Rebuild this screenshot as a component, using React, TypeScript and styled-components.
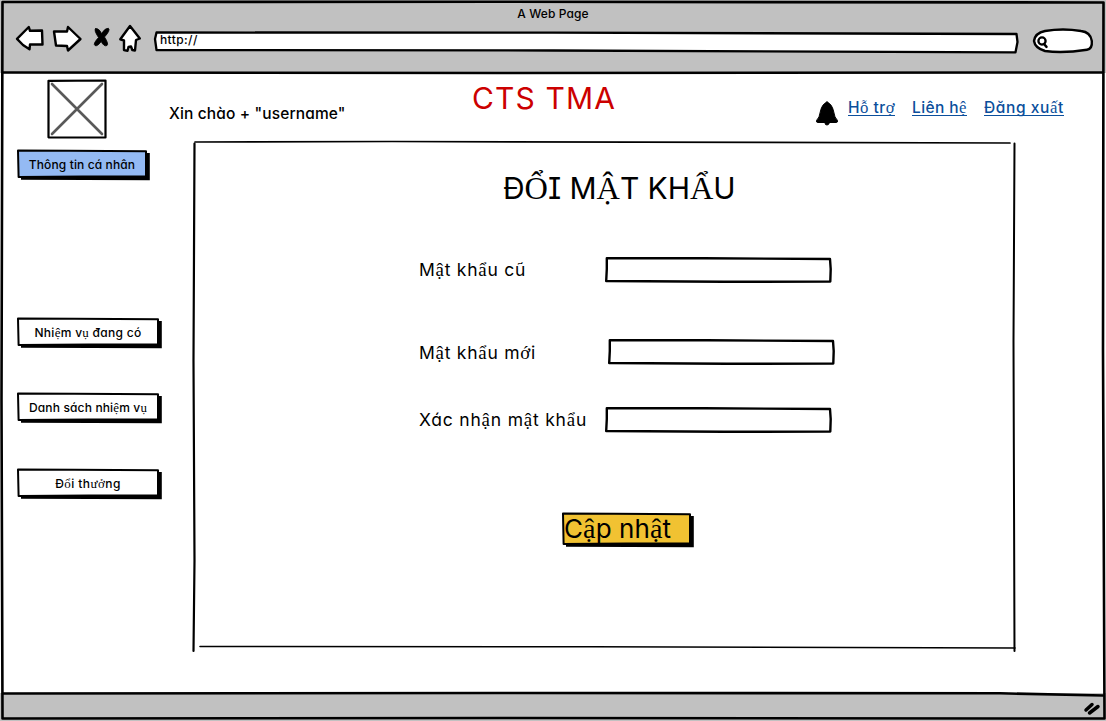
import React from "react";
import styled, { createGlobalStyle } from "styled-components";

const GlobalStyle = createGlobalStyle`
  * { box-sizing: border-box; }
  html, body { margin: 0; padding: 0; background: #fff; overflow: hidden; }
`;

const Browser = styled.div`
  position: relative;
  width: 1106px;
  height: 721px;
  display: flex;
  flex-direction: column;
  overflow: hidden;
  color: #000;
  background: #fff;
  font-family: Inter, "Open Sans", sans-serif;
  font-feature-settings: "cv11" 1, "cv08" 1;
`;

const Drawing = styled.svg`
  display: block;
  position: absolute;
  inset: 0;
  width: 100%;
  height: 100%;
  overflow: visible;
  pointer-events: none;
  fill: none;
  stroke: #000;
  stroke-linecap: round;
  stroke-linejoin: round;
`;

const Icon = styled.svg<{ $solid?: boolean }>`
  display: block;
  flex: none;
  overflow: visible;
  fill: ${(p) => (p.$solid ? "#000" : "#fff")};
  stroke: #000;
  stroke-width: ${(p) => (p.$solid ? 1 : 2.4)};
  stroke-linecap: round;
  stroke-linejoin: round;
`;

const Text = styled.span<{ $size: number; $spacing?: number; $color?: string }>`
  position: relative;
  display: block;
  white-space: pre;
  font-size: ${(p) => p.$size}px;
  font-weight: ${(p) => (p.$size < 17 ? 500 : 430)};
  line-height: ${(p) => Math.round(p.$size * 1.3)}px;
  letter-spacing: ${(p) => p.$spacing ?? 0}px;
  color: ${(p) => p.$color ?? "#000"};
`;

const Serif = styled.span`
  font-family: "Liberation Serif", serif;
  font-size: 1.08em;
  font-weight: 400;
  line-height: 0;
`;

const SERIF_RUN = /([\u1ea0-\u1ef9\u01a0\u01a1\u01af\u01b0]+)/;

function Label(props: { children: string; size: number; spacing?: number; color?: string }) {
  return (
    <Text $size={props.size} $spacing={props.spacing} $color={props.color}>
      {props.children.split(SERIF_RUN).map((part, i) =>
        i % 2 ? <Serif key={i}>{part}</Serif> : part
      )}
    </Text>
  );
}

const Chrome = styled.header`
  height: 73px;
  flex: none;
  display: flex;
  flex-direction: column;
  background: #c1c1c1;
`;

const TitleBar = styled.div`
  height: 25px;
  padding-top: 6px;
  display: flex;
  justify-content: center;
`;

const ToolBar = styled.div`
  display: flex;
  align-items: flex-start;
  padding-left: 15px;
`;

const NavIcons = styled.div`
  display: flex;
  width: 138px;
`;

const Address = styled.div`
  position: relative;
  width: 866px;
  height: 22px;
  margin-top: 4px;
  padding: 3px 7px;
`;

const Search = styled.div`
  position: relative;
  width: 61px;
  height: 26px;
  margin: 3px 0 0 14px;
`;

const Page = styled.div`
  flex: 1;
  display: flex;
`;

const Side = styled.aside`
  width: 169px;
  padding: 6px 0 0 16px;
  display: flex;
  flex-direction: column;
`;

const Avatar = styled.div`
  position: relative;
  width: 60px;
  height: 60px;
  margin: 0 0 10px 31px;
`;

const ButtonBox = styled.button<{ $w: number; $h: number; $gap?: number; $left?: boolean }>`
  position: relative;
  display: flex;
  align-items: center;
  justify-content: ${(p) => (p.$left ? "flex-start" : "center")};
  width: ${(p) => p.$w}px;
  height: ${(p) => p.$h}px;
  margin: 0 0 ${(p) => p.$gap ?? 0}px;
  padding: 0 5px ${(p) => (p.$left ? 3 : 0)}px 3px;
  border: 0;
  background: none;
  font: inherit;
  font-feature-settings: inherit;
`;

const Main = styled.main`
  flex: 1;
  display: flex;
  flex-direction: column;
`;

const TopRow = styled.div`
  height: 68px;
  display: flex;
  align-items: flex-start;
`;

const Greeting = styled.div`
  width: 303px;
  padding-top: 31px;
`;

const Brand = styled.div`
  width: 343px;
  padding-top: 6px;
`;

const Links = styled.nav`
  display: flex;
  padding-top: 24px;
`;

const LinkItem = styled.a<{ $w: number; $gap: number }>`
  width: ${(p) => p.$w}px;
  height: 19px;
  padding-top: 1px;
  margin-right: ${(p) => p.$gap}px;
  border-bottom: 1px solid #0b4f9c;
`;

const Panel = styled.section`
  position: relative;
  width: 824px;
  height: 512px;
  margin-left: 23px;
`;

const Heading = styled.div`
  padding: 28px 0 0 311px;
  height: 116px;
`;

const Field = styled.label<{ $h: number; $shift?: number }>`
  display: flex;
  align-items: flex-start;
  height: ${(p) => p.$h}px;
  padding-left: 227px;
  gap: ${(p) => p.$shift ?? 0}px;
`;

const FieldName = styled.div<{ $drop: number }>`
  width: 185px;
  flex: none;
  padding-top: ${(p) => p.$drop}px;
`;

const Input = styled.div`
  position: relative;
  width: 228px;
  height: 27px;
`;

const Submit = styled.div`
  padding-left: 369px;
`;

const Status = styled.footer`
  height: 28px;
  flex: none;
  background: #c1c1c1;
`;

function SketchButton(props: {
  children: string; w: number; h: number; gap?: number; fill?: string; size: number; spacing?: number; left?: boolean;
}) {
  const { w, h } = props;
  return (
    <ButtonBox type="button" $w={w} $h={h} $gap={props.gap} $left={props.left}>
      <Drawing>
        <path d={`M5 ${h - 3.2} L${w - 2.2} ${h - 2.8} L${w - 2.2} 4`} strokeWidth="4" strokeLinecap="butt" strokeLinejoin="miter" />
        <path d={`M2 1.6 L${w * 0.4} 1.8 L${w - 4} 2.2 L${w - 4} ${h - 4.5} L${w / 2} ${h - 4.4} L2.6 ${h - 4} Z`} fill={props.fill ?? "#fff"} strokeWidth="2" />
      </Drawing>
      <Label size={props.size} spacing={props.spacing}>{props.children}</Label>
    </ButtonBox>
  );
}

function SketchInput() {
  return (
    <Input>
      <Drawing>
        <path d="M2.8 1.2 L100 1.3 L226 2 L226.7 12 L226.3 24.5 L120 24.8 L2.2 24 L2.8 12 Z" fill="#fff" strokeWidth="2.4" />
      </Drawing>
    </Input>
  );
}

export default function App() {
  return (
    <Browser>
      <GlobalStyle />
      <Chrome>
        <TitleBar><Label size={12} spacing={0.1}>A Web Page</Label></TitleBar>
        <ToolBar>
          <NavIcons>
            <Icon width="138" height="28" viewBox="15 23 138 28">
              <path d="M17 36.800 L28.800 25 L30 28.800 L42 28.500 L42.500 42.500 L30 42.500 L29.500 47.300 L23 43 Z" />
              <path d="M54 29.500 L67 29.500 L68 25 L80.500 37 L68 48.500 L67 44 L56 43.500 Z" />
              <path d="M95.500 26.700 Q99 26 101.500 31.500 Q105 26 108.300 26.200 Q111 28 104.500 35 Q109 42 107 43.500 Q104 45 101.200 39.500 Q97 45 95 43.500 Q92.500 42 98.500 35.500 Q93.500 28 95.500 26.700 Z" fill="#000" strokeWidth="0.800" />
              <path d="M130 24 L139.800 36.500 L136 38 L135 48.500 L132.300 48 L131 44.500 L128.500 45 L127.500 48.800 L124 48 L124 38.500 L120.300 37.300 Z" />
            </Icon>
          </NavIcons>
          <Address>
            <Drawing>
              <path d="M3.500 3.500 L2 10 L3.500 21 L400 21.500 L862.500 23.300 L864.500 13 L863.500 5 L400 3.600 Z" fill="#fff" strokeWidth="2.300" />
            </Drawing>
            <Label size={12} spacing={0.4}>http://</Label>
          </Address>
          <Search>
            <Drawing>
              <path d="M12 3 Q30 0 48 3 Q57.500 4 58.800 13 Q59.500 21 54 21.700 Q30 25.500 12 23 Q2 20 1 13 Q2 5 12 3 Z" fill="#fff" strokeWidth="2.400" />
              <circle cx="9" cy="13" r="3.600" strokeWidth="2.300" />
              <path d="M11 16 L13.500 18.800" strokeWidth="2.500" />
            </Drawing>
          </Search>
        </ToolBar>
      </Chrome>
      <Page>
        <Side>
          <Avatar>
            <Drawing>
              <path d="M1.500 1.800 L58.500 1.500 L58.500 58.500 L1.500 58.300 Z" fill="#fff" strokeWidth="2.200" />
              <path d="M5 5 L55 55 M55 5 L5 55" stroke="#595959" strokeWidth="2.600" />
            </Drawing>
          </Avatar>
          <SketchButton w={134} h={32} gap={136} fill="#94baf3" size={12} spacing={0.120}>Thông tin cá nhân</SketchButton>
          <SketchButton w={146} h={32} gap={43} size={12} spacing={0.300}>Nhiệm vụ đang có</SketchButton>
          <SketchButton w={146} h={32} gap={44} size={12} spacing={0.150}>Danh sách nhiệm vụ</SketchButton>
          <SketchButton w={146} h={32} size={12} spacing={0.450}>Đổi thưởng</SketchButton>
        </Side>
        <Main>
          <TopRow>
            <Greeting><Label size={15.500} spacing={0.130}>Xin chào + "username"</Label></Greeting>
            <Brand><Label size={30} spacing={1.150} color="#cc0000">CTS TMA</Label></Brand>
            <Links>
              <Icon $solid width="33" height="28" viewBox="815 96 33 28">
                <path d="M827 101 Q832 103 833.500 110 Q834.500 117 837.500 119.500 Q838 121.500 836 121.500 L818 121.500 Q816 121.500 816.500 119.500 Q819.500 117 820.500 110 Q822 103 827 101 Z" />
                <circle cx="827" cy="122" r="2" />
              </Icon>
              <LinkItem $w={47} $gap={17}><Label size={15.500} spacing={0.500} color="#0b4f9c">Hỗ trợ</Label></LinkItem>
              <LinkItem $w={55} $gap={17}><Label size={15.500} spacing={0.400} color="#0b4f9c">Liên hệ</Label></LinkItem>
              <LinkItem $w={80} $gap={0}><Label size={15.500} spacing={0.600} color="#0b4f9c">Đăng xuất</Label></LinkItem>
            </Links>
          </TopRow>
          <Panel>
            <Drawing>
              <path d="M3 1 L200 0.500 L818 2" strokeWidth="1.700" />
              <path d="M2.500 2.500 L1.500 220 L2.500 420 L1.500 510" strokeWidth="2.200" />
              <path d="M822.500 2.500 L821.500 200 L822.500 510" strokeWidth="2" />
              <path d="M8 505.500 L400 505.800 L823 507" strokeWidth="1.600" />
            </Drawing>
            <Heading><Label size={30} spacing={-0.050}>ĐỔI MẬT KHẨU</Label></Heading>
            <Field $h={82}><FieldName $drop={1}><Label size={17.500} spacing={0.750}>Mật khẩu cũ</Label></FieldName><SketchInput /></Field>
            <Field $h={68} $shift={3}><FieldName $drop={2}><Label size={17.500} spacing={0.750}>Mật khẩu mới</Label></FieldName><SketchInput /></Field>
            <Field $h={105}><FieldName $drop={1}><Label size={17.500} spacing={0.800}>Xác nhận mật khẩu</Label></FieldName><SketchInput /></Field>
            <Submit><SketchButton w={133} h={36} fill="#f1c232" size={26} spacing={0.100} left>Cập nhật</SketchButton></Submit>
          </Panel>
        </Main>
      </Page>
      <Status />
      <Drawing>
        <path d="M2.500 2 L500 1.800 L1103.500 2.500 L1103 350 L1104.500 718.500 L500 718 L2.500 718.500 L1.500 400 Z" strokeWidth="2.600" />
        <path d="M3 72.500 L500 73 L1103 72.500" strokeWidth="2.600" />
        <path d="M3 693.500 L500 693 L1000 693.300 L1103 695.500" strokeWidth="2.600" />
        <path d="M1086 710 L1092 704.500 M1089.500 713 L1098 706.500" strokeWidth="3.500" />
      </Drawing>
    </Browser>
  );
}
